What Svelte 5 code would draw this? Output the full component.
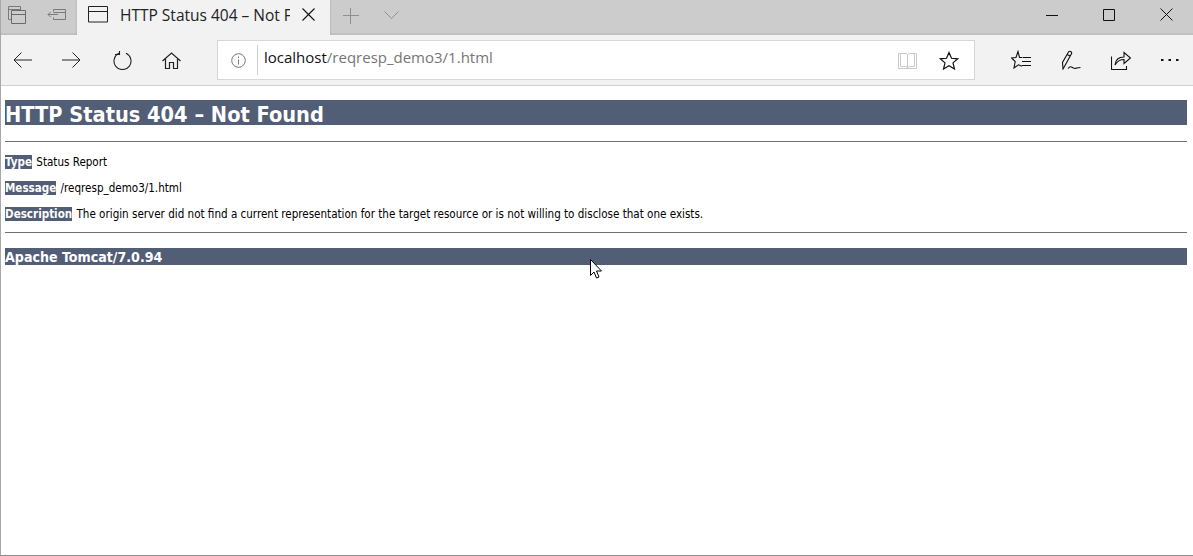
<script lang="ts">
  const rows = [
    { label: 'Type', text: 'Status Report' },
    { label: 'Message', text: '/reqresp_demo3/1.html' },
    { label: 'Description', text: 'The origin server did not find a current representation for the target resource or is not willing to disclose that one exists.' }
  ];
</script>

<div class="window">
  <!-- Tab strip -->
  <div class="tabstrip">
    <div class="strip-left">
      <button class="strip-btn" aria-label="Tabs aside">
        <svg width="18" height="18" viewBox="0 0 18 18" fill="none" stroke="#7a7a7a">
          <path d="M3.500 13.500h-3v-13h12v4M.5 3.500h12" />
          <path d="M3.500 4.500h14v13h-14zM3.500 8.500h14" stroke="#6a6a6a" />
        </svg>
      </button>
      <button class="strip-btn" aria-label="Set aside">
        <svg width="19" height="11" viewBox="0 0 19 11" fill="none" stroke="#7a7a7a">
          <path d="M6.500 2.500v-2h12v10h-12v-2M6.500 3.500h12" />
          <path d="M11 5.500h-10M3.500 3l-2.500 2.500 2.500 2.500" />
        </svg>
      </button>
    </div>
    <div class="tab">
      <svg class="tab-icon" width="20" height="17" viewBox="0 0 20 17" fill="none" stroke="#222">
        <path d="M.5.500h19v15.500h-19zM.5 5.500h19" />
      </svg>
      <span class="tab-title">HTTP Status 404 – Not Found</span>
      <svg class="tab-close" width="13" height="13" viewBox="0 0 13 13" fill="none" stroke="#111" stroke-width="1.100">
        <path d="M.5.500l12 12M12.500.500l-12 12" />
      </svg>
    </div>
    <div class="strip-new">
      <svg class="plus" width="16" height="16" viewBox="0 0 16 16" fill="none" stroke="#8f8f8f">
        <path d="M7.500 0v16M0 7.500h16" />
      </svg>
      <svg width="15" height="8" viewBox="0 0 15 8" fill="none" stroke="#8f8f8f">
        <path d="M.5.500l7 7 7-7" />
      </svg>
    </div>
    <div class="caption">
      <svg width="12" height="12" viewBox="0 0 12 12" fill="none" stroke="#111"><path d="M0 6.500h12" /></svg>
      <svg width="12" height="12" viewBox="0 0 12 12" fill="none" stroke="#111"><path d="M.5.500h11v11h-11z" /></svg>
      <svg width="13" height="13" viewBox="0 0 13 13" fill="none" stroke="#111"><path d="M.5.500l12 12M12.500.500l-12 12" /></svg>
    </div>
  </div>

  <!-- Toolbar -->
  <div class="toolbar">
    <div class="nav">
      <svg width="19" height="16" viewBox="0 0 19 16" fill="none" stroke="#222"><path d="M19 8h-18M8.500.500l-7.500 7.500 7.500 7.500" /></svg>
      <svg width="19" height="16" viewBox="0 0 19 16" fill="none" stroke="#222"><path d="M0 8h18M10.500.500l7.500 7.500-7.500 7.500" /></svg>
      <svg class="refresh" width="19" height="19" viewBox="0 0 19 19" fill="none" stroke="#222" stroke-width="1.100"><path d="M6 2.300a8.500 8.500 0 1 0 7 0" /><path d="M6.500 -.5v4h-4.500" /></svg>
      <svg width="19" height="17" viewBox="0 0 19 17" fill="none" stroke="#222" stroke-width="1.200"><path d="M.5 9l9-8 9 8M3.500 7v9.500h4v-6h4v6h4v-9.500" /></svg>
    </div>
    <div class="address">
      <svg class="info" width="15" height="15" viewBox="0 0 15 15" fill="none" stroke="#777"><circle cx="7.500" cy="7.500" r="6.800" /><path d="M7.500 6.500v5M7.500 3.500v1.500" /></svg>
      <div class="url"><span class="host">localhost</span><span class="path">/reqresp_demo3/1.html</span></div>
      <svg class="read" width="19" height="17" viewBox="0 0 19 17" fill="none" stroke="#c8c8c8"><path d="M.5 1.500h7.500l1.500 1 1.500-1h7.500v15h-18zM9.500 2.500v14M2.500 1.500v13h5l2 1 2-1h5v-13" /></svg>
      <svg class="fav" width="20" height="19" viewBox="0 0 20 19" fill="none" stroke="#111" stroke-width="1.200"><path d="M10 1.500l2.500 5.800 6.300.5-4.800 4.100 1.500 6.100-5.500-3.300-5.500 3.300 1.500-6.100-4.800-4.100 6.300-.5z" /></svg>
    </div>
    <div class="tools">
      <svg width="20" height="20" viewBox="0 0 20 20" fill="none" stroke="#111" stroke-width="1.100"><path d="M11 7.500h-2.500l-1.500-6-2 6-4.500.5 3.700 3.500-1.200 6.500 4.500-3.200 3.500 1.500M11.500 7.500h8.500M11 11.500h9M11 15.500h9" /></svg>
      <svg width="20" height="20" viewBox="0 0 20 20" fill="none" stroke="#111" stroke-width="1.100"><path d="M2 19l-.5-6.500 6-10.500c1-1.500 3.500-.5 3.200 1.300l-6 11zM6.200 4.500l3 1.800M7 18.500c2-2.500 3-2 4.500-1s3 1.500 4 .5l4-.5" /></svg>
      <svg width="20" height="19" viewBox="0 0 20 19" fill="none" stroke="#111" stroke-width="1.100"><path d="M.5 5.500v13h15v-3.500" /><path d="M4 14c.5-5 4-8 9-8v-4.500l6.500 5.500-6.500 5.500v-4c-4 0-7 2-9 5.500z" /></svg>
      <svg width="18" height="4" viewBox="0 0 18 4" fill="#111"><rect x="0" y="1" width="2.500" height="2" /><rect x="7.500" y="1" width="2.500" height="2" /><rect x="15" y="1" width="2.500" height="2" /></svg>
    </div>
  </div>

  <!-- Tomcat error page -->
  <main class="page">
    <h1>HTTP Status 404 – Not Found</h1>
    <hr />
    {#each rows as row}
      <p><b>{row.label}</b> {row.text}</p>
    {/each}
    <hr class="second" />
    <h3>Apache Tomcat/7.0.94</h3>
  </main>

  <svg class="cursor" width="13" height="20" viewBox="0 0 13 20">
    <path d="M.5.500v16l3.500-3.500 2.500 6 2.500-1-2.500-6h5z" fill="#fff" stroke="#000" />
  </svg>
</div>

<style>
  :global(body) {
    margin: 0;
    background: #fff;
  }

  .window {
    position: relative;
    display: flex;
    flex-direction: column;
    height: 556px;
    box-sizing: border-box;
    border-left: 1px solid #a8a8a8;
    border-bottom: 1px solid #8a8a8a;
    overflow: hidden;
    font-family: "Open Sans", "Noto Sans", sans-serif;
  }

  .tabstrip {
    display: flex;
    align-items: stretch;
    height: 35px;
    background: #cccccc;
    box-shadow: inset 0 -2px #c0c0c0;
    flex: none;
  }

  .strip-left {
    display: flex;
    align-items: center;
    width: 76px;
    padding: 0 0 6px 7px;
    box-sizing: border-box;
    gap: 21px;
  }

  .strip-btn {
    display: flex;
    padding: 0;
    border: 0;
    background: none;
  }

  .tab {
    display: flex;
    align-items: center;
    width: 253px;
    box-sizing: border-box;
    padding: 0 0 6px 11px;
    background: #f2f2f2;
    box-shadow: 0 0 2px #a6a6a6;
  }

  .tab-icon {
    flex: none;
  }

  .tab-title {
    width: 170px;
    margin-left: 12px;
    overflow: hidden;
    white-space: nowrap;
    font-size: 15.5px;
    color: #222;
  }

  .tab-close {
    flex: none;
    margin-left: 12px;
  }

  .strip-new {
    display: flex;
    align-items: center;
    gap: 25px;
    padding: 0 0 6px 13px;
  }

  .plus {
    margin-top: 2px;
  }

  .caption {
    display: flex;
    align-items: center;
    gap: 45px;
    margin-left: auto;
    padding: 0 20px 6px 0;
  }

  .toolbar {
    display: flex;
    align-items: center;
    height: 51px;
    flex: none;
    box-sizing: border-box;
    background: #f2f2f2;
    border-bottom: 1px solid #cfcfcf;
  }

  .nav {
    display: flex;
    align-items: center;
    gap: 30px;
    width: 216px;
    padding-left: 12px;
    box-sizing: border-box;
  }

  .refresh {
    margin-left: 2px;
  }

  .address {
    display: flex;
    align-items: center;
    width: 758px;
    height: 40px;
    box-sizing: border-box;
    background: #fff;
    border: 1px solid #d6d6d6;
  }

  .info {
    margin-left: 13px;
    flex: none;
  }

  .url {
    margin-left: 11px;
    padding-left: 6px;
    height: 30px;
    line-height: 24px;
    border-left: 1px solid #d0d0d0;
    font-size: 15px;
    white-space: nowrap;
  }

  .host {
    color: #111;
  }

  .path {
    color: #767676;
  }

  .read {
    margin-left: auto;
    flex: none;
  }

  .fav {
    margin-left: 22px;
    margin-right: 15px;
    flex: none;
  }

  .tools {
    display: flex;
    align-items: center;
    gap: 30px;
    padding-left: 36px;
  }

  .page {
    flex: 1;
    padding: 14px 6px 0 4px;
    background: #fff;
    color: #000;
    font-family: "DejaVu Sans", Verdana, sans-serif;
    font-stretch: condensed;
    font-size: 12px;
  }

  h1 {
    margin: 0;
    height: 25px;
    line-height: 30px;
    background: #525d76;
    color: #fff;
    font-size: 21.6px;
    font-weight: 700;
    white-space: nowrap;
  }

  hr {
    height: 1px;
    margin: 16px 0 0;
    border: 0;
    background: #6f6f6f;
  }

  hr.second {
    margin-top: 11px;
  }

  p {
    margin: 12px 0 0;
    height: 14px;
    line-height: 14px;
    white-space: nowrap;
    font-size: 11.55px;
  }

  hr + p {
    margin-top: 13px;
  }

  p b {
    display: inline-block;
    margin-right: 1px;
    background: #525d76;
    color: #fff;
    font-weight: 700;
  }

  h3 {
    margin: 15px 0 0;
    height: 17px;
    line-height: 18px;
    background: #525d76;
    color: #fff;
    font-size: 14.1px;
    font-weight: 700;
    white-space: nowrap;
  }

  .cursor {
    position: absolute;
    left: 589px;
    top: 259px;
  }
</style>
